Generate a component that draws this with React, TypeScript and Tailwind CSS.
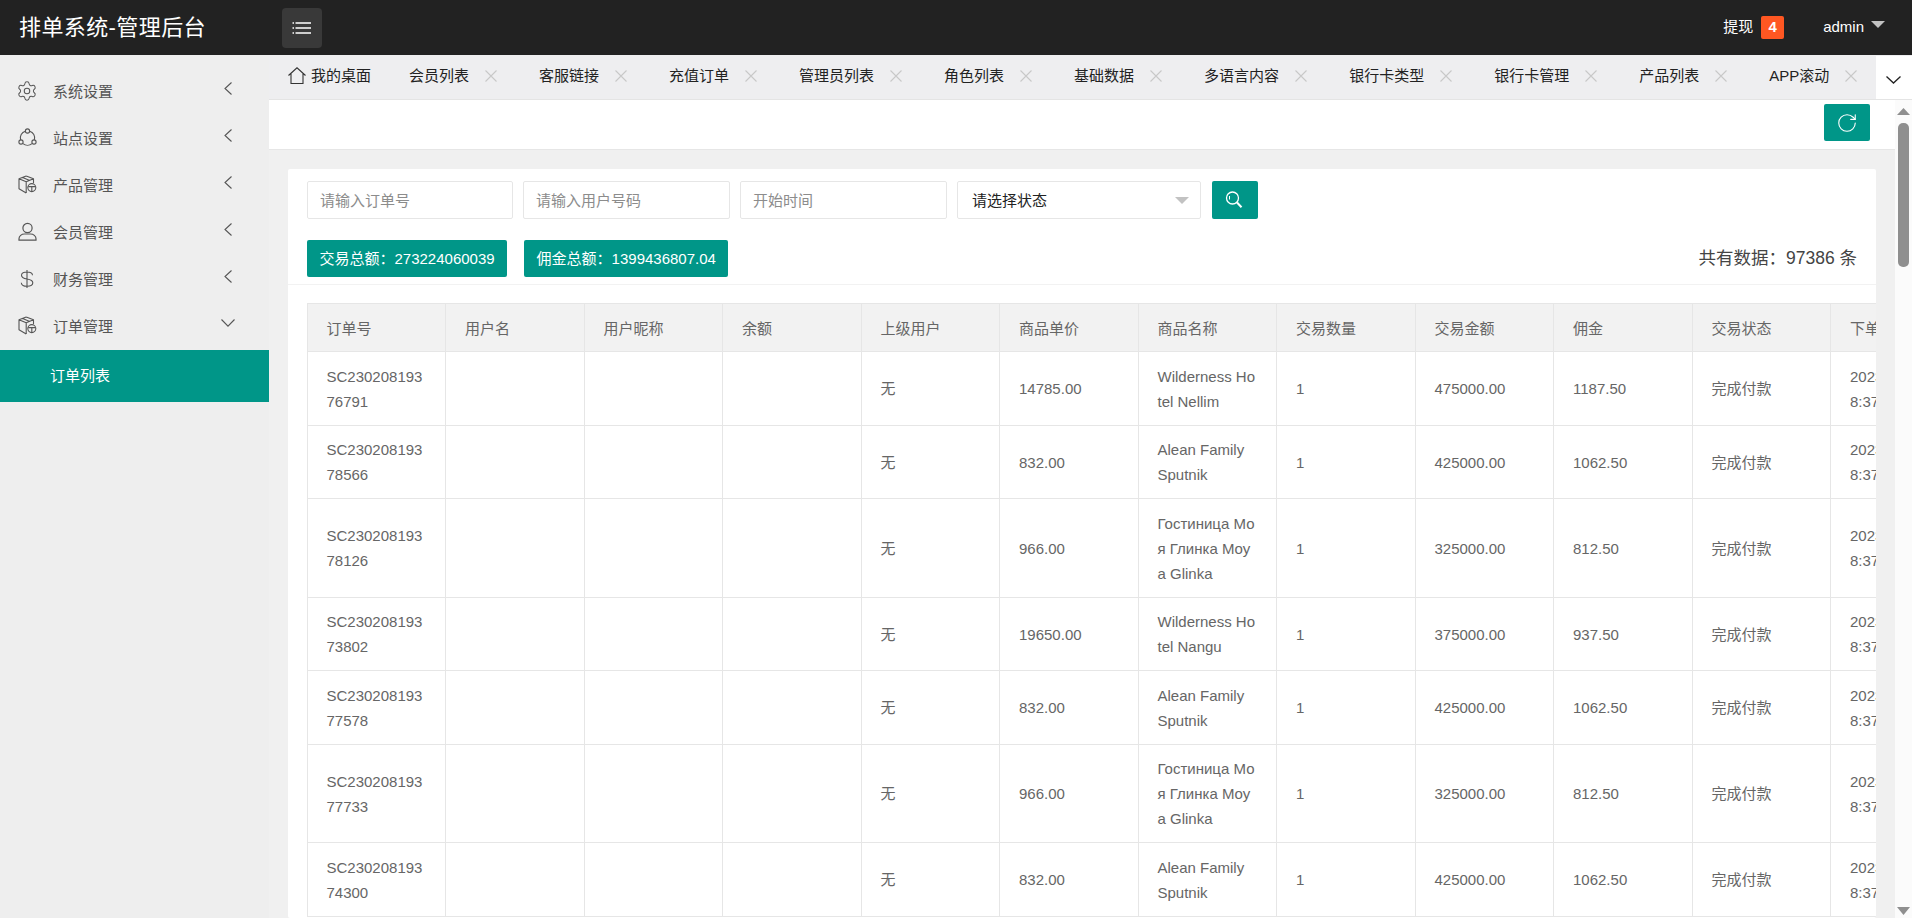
import React from "react";
import { Settings, RotateCw } from "lucide-react";

function SiteIcon() {
  return (
    <svg width="19" height="19" viewBox="0 0 19 19" fill="none" stroke="#555" strokeWidth="1.1">
      <path d="M7.3 3.2A7 7 0 0 0 2.6 11.8M11.7 3.2A7 7 0 0 1 16.4 11.8M5 15.6a7 7 0 0 0 9 0" />
      <circle cx="9.5" cy="3" r="2.1" />
      <circle cx="3" cy="14" r="2.1" />
      <circle cx="16" cy="14" r="2.1" />
    </svg>
  );
}

function CubeIcon() {
  return (
    <svg width="19" height="19" viewBox="0 0 19 19" fill="none" stroke="#555" strokeWidth="1.1" strokeLinejoin="round">
      <path d="M8.2 1 15.5 3.8V8M8.2 1 1 3.8v10L8.2 18M1 3.8l7.2 3V18M8.2 6.8 15.5 3.8M4.6 2.4l7.2 3" />
      <circle cx="13.8" cy="12.6" r="4" />
      <path d="M10.2 11.6h7.2M13.8 11.6v4.8" />
    </svg>
  );
}

function UserIcon() {
  return (
    <svg width="19" height="19" viewBox="0 0 19 19" fill="none" stroke="#555" strokeWidth="1.2">
      <circle cx="9.5" cy="6" r="4.6" />
      <path d="M1 18.2v-1.4c0-2.8 2.6-4.8 5.4-4.8h6.2c2.8 0 5.4 2 5.4 4.8v1.4z" />
    </svg>
  );
}

function DollarIcon() {
  return (
    <svg width="14" height="18" viewBox="0 0 14 18" fill="none" stroke="#555" strokeWidth="1.1">
      <path d="M12.5 5.2C12.5 3 10.1 2 7 2S1.5 3.2 1.5 5.2c0 2.2 2 3.2 5.5 3.8s5.8 1.4 5.8 3.8c0 2.3-2.7 3.4-5.8 3.4s-5.7-1-5.7-3.4M7 0v18" />
    </svg>
  );
}

function TabClose() {
  return (
    <svg className="ml-[16px]" width="12" height="12" viewBox="0 0 12 12" fill="none" stroke="#c8c8c8" strokeWidth="1.1">
      <path d="M0.5 0.5 11.5 11.5M11.5 0.5 0.5 11.5" />
    </svg>
  );
}

const menu = [
  { label: "系统设置", icon: <Settings size={22} strokeWidth={1.1} color="#555" className="shrink-0" /> },
  { label: "站点设置", icon: <SiteIcon /> },
  { label: "产品管理", icon: <CubeIcon /> },
  { label: "会员管理", icon: <UserIcon /> },
  { label: "财务管理", icon: <DollarIcon /> },
  { label: "订单管理", icon: <CubeIcon />, open: true },
];

const tabs = ["会员列表", "客服链接", "充值订单", "管理员列表", "角色列表", "基础数据", "多语言内容", "银行卡类型", "银行卡管理", "产品列表", "APP滚动"];

const heads = ["订单号", "用户名", "用户昵称", "余额", "上级用户", "商品单价", "商品名称", "交易数量", "交易金额", "佣金", "交易状态", "下单时间"];

const names = {
  w1: "Wilderness Hotel Nellim",
  w2: "Wilderness Hotel Nangu",
  a: "Alean Family Sputnik",
  g: "Гостиница Моя Глинка Моуa Glinka",
};

const rows = [
  ["SC23020819376791", "14785.00", names.w1, "475000.00", "1187.50"],
  ["SC23020819378566", "832.00", names.a, "425000.00", "1062.50"],
  ["SC23020819378126", "966.00", names.g, "325000.00", "812.50"],
  ["SC23020819373802", "19650.00", names.w2, "375000.00", "937.50"],
  ["SC23020819377578", "832.00", names.a, "425000.00", "1062.50"],
  ["SC23020819377733", "966.00", names.g, "325000.00", "812.50"],
  ["SC23020819374300", "832.00", names.a, "425000.00", "1062.50"],
];

const td = "border border-[#e6e6e6] px-[19px] pt-[11.75px] pb-[10.75px] leading-[25px] break-all align-middle";

export default function App() {
  return (
    <div className="h-[918px] w-full overflow-hidden flex flex-col bg-white text-[15px] font-['Liberation_Sans','Noto_Sans_CJK_SC',sans-serif]">
      <header className="h-[55px] shrink-0 bg-[#222222] flex items-center text-white">
        <div className="w-[282px] pl-[19px] text-[22px] leading-[30px] tracking-[0.4px]">排单系统-管理后台</div>
        <button className="w-[40px] h-[40px] rounded-[4px] bg-[#393939] flex items-center justify-center">
          <svg width="20" height="12" viewBox="0 0 20 12" fill="none" stroke="#fff" strokeWidth="1.5">
            <path d="M0.5 1h1.5M3.5 1H19M0.5 6h1.5M3.5 6H19M0.5 11h1.5M3.5 11H19" />
          </svg>
        </button>
        <div className="ml-auto flex items-center">
          <span>提现</span>
          <span className="ml-[8px] w-[23px] h-[23px] rounded-[2px] bg-[#ff5722] flex items-center justify-center font-semibold">4</span>
          <span className="ml-[39px]">admin</span>
          <svg className="ml-[7px] mb-[6px]" width="14" height="7" viewBox="0 0 14 7">
            <path d="M0 0h14L7 7z" fill="#c2c2c2" />
          </svg>
          <span className="w-[27px]" />
        </div>
      </header>

      <div className="flex flex-1 min-h-0">
        <aside className="w-[269px] shrink-0 bg-[#eeeeee] pt-[12px] text-[#555555]">
          {menu.map((m) => (
            <div key={m.label} className="h-[47px] flex items-center pl-[17px] pr-[37px]">
              <span className="w-[20px] h-[20px] flex items-center justify-center">{m.icon}</span>
              <span className="ml-[16px] pt-[3px]">{m.label}</span>
              {m.open ? (
                <svg className="ml-auto -mr-[3px] -mt-[5px]" width="14" height="8" viewBox="0 0 14 8" fill="none" stroke="#555" strokeWidth="1.1">
                  <path d="M0.5 0.5 7 7.2 13.5 0.5" />
                </svg>
              ) : (
                <svg className="ml-auto -mt-[4px]" width="8" height="13" viewBox="0 0 8 13" fill="none" stroke="#555" strokeWidth="1.1">
                  <path d="M7.5 0.5 1 6.5 7.5 12.5" />
                </svg>
              )}
            </div>
          ))}
          <div className="h-[52px] mt-[1px] bg-[#009688] text-white flex items-center pl-[50px]">订单列表</div>
        </aside>

        <main className="flex-1 min-w-0 flex flex-col">
          <div className="h-[45px] shrink-0 flex bg-[#eeeef0] border-b border-[#e4e4e4] text-[#222222]">
            <div className="flex-1 min-w-0 overflow-hidden flex items-center pb-[2px] pl-[19px] whitespace-nowrap">
              <span className="shrink-0 flex items-center pr-[38px]">
                <svg className="mr-[5px] -mt-[2px]" width="18" height="17" viewBox="0 0 18 17" fill="none" stroke="#333" strokeWidth="1.1">
                  <path d="M0.5 8.5 9 0.8l8.5 7.7M3 6.5v10h12v-10" />
                </svg>
                我的桌面
              </span>
              {tabs.map((t) => (
                <span key={t} className="shrink-0 flex items-center mr-[42px]">
                  {t}
                  <TabClose />
                </span>
              ))}
            </div>
            <div className="w-[36px] shrink-0 bg-white mt-[1px] flex items-center justify-center pr-[2px]">
              <svg className="mt-[4px]" width="15" height="8" viewBox="0 0 15 8" fill="none" stroke="#222" strokeWidth="1.3">
                <path d="M0.5 0.5 7.5 7 14.5 0.5" />
              </svg>
            </div>
          </div>

          <div className="flex flex-1 min-h-0">
            <div className="flex-1 min-w-0 flex flex-col bg-[#f0f0f0]">
              <div className="h-[50px] shrink-0 bg-white border-b border-[#e6e6e6] flex justify-end items-start pt-[4px] pr-[25px]">
                <button className="w-[46px] h-[37px] rounded-[2px] bg-[#009688] flex items-center justify-center">
                  <RotateCw size={22} strokeWidth={1.2} color="#fff" />
                </button>
              </div>
              <div className="flex-1 min-h-0 px-[19px] pt-[19px] overflow-hidden">
                <div className="bg-white rounded-[2px] h-full overflow-hidden">
                  <div className="px-[19px] pt-[12px] h-[116px] border-b border-[#f2f2f2]">
                    <div className="flex items-start">
                      <input placeholder="请输入订单号" className="w-[206px] h-[38px] px-[12px] border border-[#e6e6e6] rounded-[2px] outline-none placeholder:text-[#8c8c8c]" />
                      <input placeholder="请输入用户号码" className="ml-[10px] w-[207px] h-[38px] px-[12px] border border-[#e6e6e6] rounded-[2px] outline-none placeholder:text-[#8c8c8c]" />
                      <input placeholder="开始时间" className="ml-[10px] w-[207px] h-[38px] px-[12px] border border-[#e6e6e6] rounded-[2px] outline-none placeholder:text-[#8c8c8c]" />
                      <div className="ml-[10px] w-[244px] h-[38px] pl-[14px] pr-[11px] border border-[#e6e6e6] rounded-[2px] flex items-center justify-between text-[#222222]">
                        <span className="pt-[2px]">请选择状态</span>
                        <svg width="14" height="7" viewBox="0 0 14 7">
                          <path d="M0 0h14L7 7z" fill="#c2c2c2" />
                        </svg>
                      </div>
                      <button className="ml-[11px] w-[46px] h-[38px] rounded-[2px] bg-[#009688] flex items-center justify-center">
                        <svg className="mr-[2px] mb-[1px]" width="18" height="18" viewBox="0 0 18 18" fill="none" stroke="#fff">
                          <circle cx="7.5" cy="7" r="6" strokeWidth="1.3" />
                          <path d="M4.5 5v3.5" strokeWidth="1" />
                          <path d="M12 11.5 16.5 16.3" strokeWidth="2" />
                        </svg>
                      </button>
                    </div>
                    <div className="mt-[21px] flex items-center">
                      <span className="h-[37px] px-[12.5px] leading-[37px] rounded-[2px] bg-[#009688] text-white">交易总额：273224060039</span>
                      <span className="ml-[17px] h-[37px] px-[12.5px] leading-[37px] rounded-[2px] bg-[#009688] text-white">佣金总额：1399436807.04</span>
                      <span className="ml-auto text-[17.5px] text-[#444444]">共有数据：97386 条</span>
                    </div>
                  </div>
                  <div className="pl-[18.5px] pt-[18px]">
                    <table className="table-fixed w-[1662px] border-collapse text-[#666666]">
                      <colgroup>
                        {heads.map((h) => (
                          <col key={h} className="w-[138.5px]" />
                        ))}
                      </colgroup>
                      <thead>
                        <tr className="bg-[#f2f2f2]">
                          {heads.map((h) => (
                            <th key={h} className="border border-[#e6e6e6] px-[19px] pt-[11.5px] pb-[10.5px] leading-[25px] font-normal text-left whitespace-nowrap">{h}</th>
                          ))}
                        </tr>
                      </thead>
                      <tbody>
                        {rows.map((r) => (
                          <tr key={r[0]}>
                            <td className={td}>{r[0]}</td>
                            <td className={td}></td>
                            <td className={td}></td>
                            <td className={td}></td>
                            <td className={td}>无</td>
                            <td className={td}>{r[1]}</td>
                            <td className={td}>{r[2]}</td>
                            <td className={td}>1</td>
                            <td className={td}>{r[3]}</td>
                            <td className={td}>{r[4]}</td>
                            <td className={td}>完成付款</td>
                            <td className={td}>2023-02-08 1<br />8:37:26</td>
                          </tr>
                        ))}
                      </tbody>
                    </table>
                  </div>
                </div>
              </div>
            </div>

            <div className="w-[17px] shrink-0 bg-[#fbfbfb] flex flex-col items-center">
              <svg className="mt-[8px]" width="13" height="7" viewBox="0 0 13 7">
                <path d="M0 7 6.5 0 13 7z" fill="#8f8f8f" />
              </svg>
              <div className="mt-[8px] w-[11px] h-[144px] rounded-[5px] bg-[#8f8f8f]" />
              <svg className="mt-auto mb-[3px]" width="13" height="8" viewBox="0 0 13 8">
                <path d="M0 0h13L6.5 8z" fill="#8f8f8f" />
              </svg>
            </div>
          </div>
        </main>
      </div>
    </div>
  );
}
